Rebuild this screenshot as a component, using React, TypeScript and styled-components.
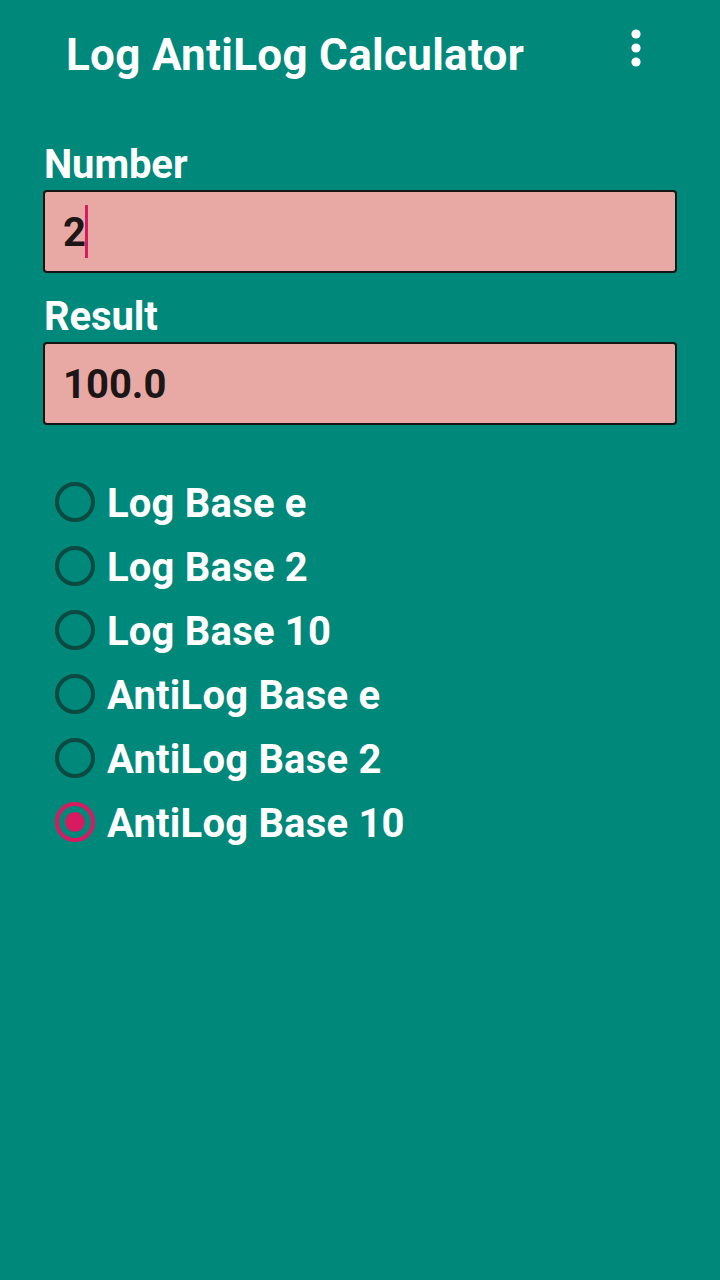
import React, { useState } from "react";
import styled, { createGlobalStyle } from "styled-components";

const teal = "#00887a";
const pink = "#d81b60";

const GlobalStyle = createGlobalStyle`
  html, body {
    margin: 0;
    padding: 0;
    background: ${teal};
  }
  body {
    font-family: Roboto, "Noto Sans", sans-serif;
  }
`;

const options = [
  "Log Base e",
  "Log Base 2",
  "Log Base 10",
  "AntiLog Base e",
  "AntiLog Base 2",
  "AntiLog Base 10",
];

export default function App() {
  const [selected, setSelected] = useState(5);

  return (
    <Screen>
      <GlobalStyle />
      <Toolbar>
        <Title>Log AntiLog Calculator</Title>
        <MenuButton aria-label="More options">
          <svg width="12" height="40" viewBox="0 0 12 40">
            <circle cx="6" cy="6" r="4.6" fill="#fff" />
            <circle cx="6" cy="20" r="4.6" fill="#fff" />
            <circle cx="6" cy="34" r="4.6" fill="#fff" />
          </svg>
        </MenuButton>
      </Toolbar>

      <Content>
        <Label>Number</Label>
        <Field>
          <FieldText>2</FieldText>
          <Caret />
        </Field>

        <Label>Result</Label>
        <Field>
          <FieldText>100.0</FieldText>
        </Field>

        <RadioGroup>
          {options.map((label, i) => (
            <RadioRow key={label} onClick={() => setSelected(i)}>
              <RadioCircle checked={selected === i}>
                {selected === i && <RadioDot />}
              </RadioCircle>
              <RadioLabel>{label}</RadioLabel>
            </RadioRow>
          ))}
        </RadioGroup>
      </Content>
    </Screen>
  );
}

const Screen = styled.div`
  width: 720px;
  min-height: 1280px;
  background: ${teal};
  color: #fff;
`;

const Toolbar = styled.div`
  height: 112px;
  display: flex;
  align-items: center;
  justify-content: space-between;
  padding: 0 78px 0 66px;
  box-sizing: border-box;
`;

const Title = styled.h1`
  margin: 0;
  margin-top: -2px;
  font-size: 44px;
  font-weight: 700;
  letter-spacing: 0.3px;
  color: #fff;
`;

const MenuButton = styled.div`
  display: flex;
  align-items: center;
  margin-top: -16px;
`;

const Content = styled.div`
  padding: 28px 43px 0 43px;
  display: flex;
  flex-direction: column;
`;

const Label = styled.div`
  font-size: 40px;
  font-weight: 700;
  line-height: 50px;
  padding-left: 1px;
  letter-spacing: -0.1px;
`;

const Field = styled.div`
  height: 83px;
  box-sizing: border-box;
  border: 2px solid #141414;
  border-radius: 4px;
  background: #e8a8a4;
  display: flex;
  align-items: center;
  padding-left: 18px;
  margin-bottom: 19px;
`;

const FieldText = styled.span`
  font-size: 40px;
  font-weight: 700;
  color: #1c1616;
  margin-top: 2px;
`;

const Caret = styled.span`
  width: 3px;
  height: 53px;
  background: ${pink};
  margin-left: -1px;
`;

const RadioGroup = styled.div`
  margin-top: 26px;
  display: flex;
  flex-direction: column;
`;

const RadioRow = styled.div`
  height: 64px;
  display: flex;
  align-items: center;
  padding-left: 12px;
  cursor: pointer;
`;

const RadioCircle = styled.span<{ checked: boolean }>`
  width: 40px;
  height: 40px;
  box-sizing: border-box;
  border-radius: 50%;
  border: 4px solid ${(p) => (p.checked ? pink : "#0b4a41")};
  display: flex;
  align-items: center;
  justify-content: center;
  flex-shrink: 0;
`;

const RadioDot = styled.span`
  width: 20px;
  height: 20px;
  border-radius: 50%;
  background: ${pink};
`;

const RadioLabel = styled.span`
  margin-left: 12px;
  font-size: 40px;
  font-weight: 700;
  letter-spacing: 0.2px;
  color: #fff;
  margin-top: 2px;
`;
